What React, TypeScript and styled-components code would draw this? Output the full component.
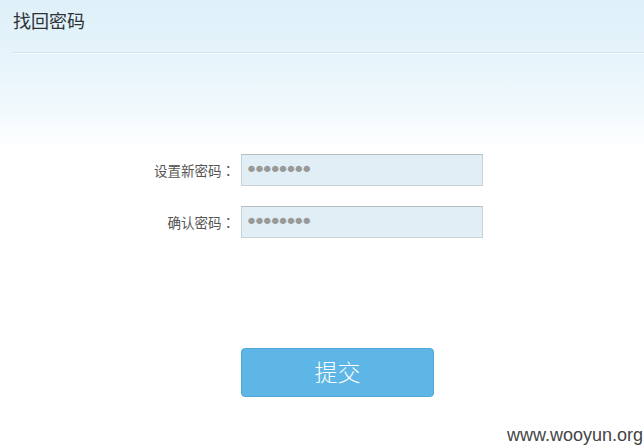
import React from "react";
import styled, { createGlobalStyle } from "styled-components";

const Global = createGlobalStyle`
  html, body { margin: 0; padding: 0; background: #fff; }
  body { font-family: "Liberation Sans", "Noto Sans CJK SC", sans-serif; }
`;

const Page = styled.div`
  position: relative;
  width: 644px;
  height: 447px;
  overflow: hidden;
  background: linear-gradient(to bottom, #dff0f9 0px, #e6f4fb 60px, #f3fafd 115px, #ffffff 150px);
`;

const Header = styled.div`
  padding: 9px 0 0 13px;
  height: 52px;
  box-sizing: border-box;
`;

const Title = styled.h1`
  margin: 0;
  font-size: 18px;
  font-weight: normal;
  color: #2f3235;
  line-height: 22px;
  font-family: "Noto Sans CJK SC", sans-serif;
`;

const Divider = styled.div`
  margin-left: 12px;
  height: 1px;
  background: #d3e3ea;
  border-bottom: 1px solid #f4fbfe;
`;

const Form = styled.form`
  display: flex;
  flex-direction: column;
  gap: 20px;
  margin-top: 100px;
`;

const Row = styled.div`
  display: flex;
  align-items: center;
`;

const Label = styled.label`
  width: 235px;
  padding-right: 6px;
  text-align: right;
  font-size: 13.5px;
  color: #555;
  font-family: "Noto Sans CJK TC", "Noto Sans CJK SC", sans-serif;
`;

const Input = styled.input`
  width: 242px;
  height: 32px;
  box-sizing: border-box;
  border: 1px solid #c9d3d7;
  border-top-color: #b4bec3;
  background: #e1eef5;
  padding: 0 0 2px 3px;
  font-size: 22px;
  letter-spacing: -5.1px;
  color: #999;
  font-family: "DejaVu Sans", sans-serif;
  outline: none;
`;

const ButtonRow = styled.div`
  display: flex;
  padding-left: 241px;
  margin-top: 110px;
`;

const Submit = styled.button`
  width: 193px;
  height: 49px;
  border: 1px solid #4fa7d6;
  border-radius: 4px;
  background: #5db6e5;
  color: #fff;
  font-size: 23px;
  font-family: "Noto Sans CJK SC", sans-serif;
  font-weight: 300;
  padding: 0 0 4px 0;
  cursor: pointer;
`;

const Watermark = styled.div`
  position: absolute;
  right: 1px;
  bottom: 1px;
  font-size: 18px;
  color: #444;
  font-family: "Liberation Sans", sans-serif;
`;

export default function App() {
  return (
    <>
      <Global />
      <Page>
        <Header>
          <Title>找回密码</Title>
        </Header>
        <Divider />
        <Form onSubmit={(e) => e.preventDefault()}>
          <Row>
            <Label>设置新密码：</Label>
            <Input type="password" defaultValue="12345678" />
          </Row>
          <Row>
            <Label>确认密码：</Label>
            <Input type="password" defaultValue="12345678" />
          </Row>
        </Form>
        <ButtonRow>
          <Submit type="submit">提交</Submit>
        </ButtonRow>
        <Watermark>www.wooyun.org</Watermark>
      </Page>
    </>
  );
}
